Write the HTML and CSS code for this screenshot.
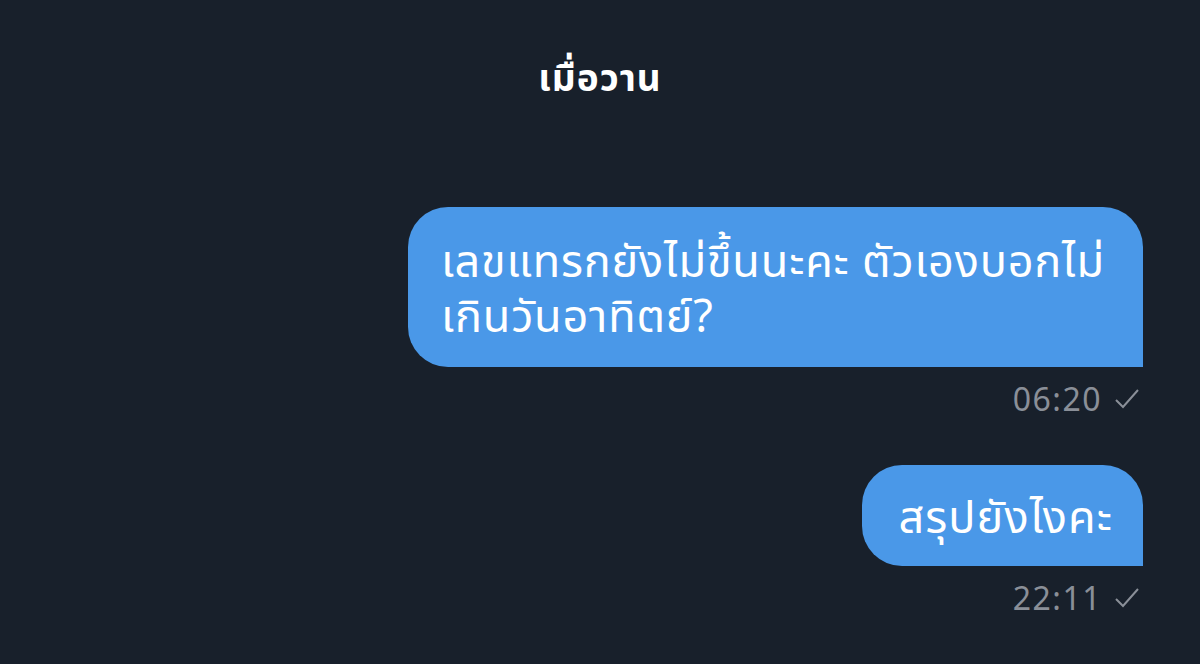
FILE: index.html
```html
<!DOCTYPE html>
<html lang="th">
<head>
  <meta charset="utf-8">
  <link rel="stylesheet" href="styles.css">
</head>
<body>
  <div class="chat">
    <div class="day">เมื่อวาน</div>
    <div class="msg">
      <div class="bubble">เลขแทรกยังไม่ขึ้นนะคะ ตัวเองบอกไม่<br>เกินวันอาทิตย์?</div>
      <div class="meta">06:20 <svg class="tick" viewBox="0 0 26 22"><path d="M2 12 L9 19 L24 2" fill="none" stroke="currentColor" stroke-width="2"/></svg></div>
    </div>
    <div class="msg">
      <div class="bubble">สรุปยังไงคะ</div>
      <div class="meta">22:11 <svg class="tick" viewBox="0 0 26 22"><path d="M2 12 L9 19 L24 2" fill="none" stroke="currentColor" stroke-width="2"/></svg></div>
    </div>
  </div>
</body>
</html>
```

FILE: styles.css
```css
html, body {
  margin: 0;
  height: 100%;
}
body {
  background-color: #18202b;
  font-family: "Noto Sans", "Noto Sans Thai", sans-serif;
  color: white;
}
.chat {
  display: flex;
  flex-direction: column;
}
.day {
  align-self: center;
  font-size: 37px;
  font-weight: bold;
  letter-spacing: 1px;
  margin: 52px 0 0;
  line-height: 50px;
}
.msg {
  display: flex;
  flex-direction: column;
  align-items: flex-end;
  margin-right: 57px;
}
.day + .msg {
  margin-top: 105px;
}
.msg + .msg {
  margin-top: 46px;
}
.bubble {
  background-color: #4a98e8;
  border-radius: 40px 40px 0 40px;
  font-size: 45px;
  letter-spacing: 0.8px;
  line-height: 55px;
  padding: 25px 38px 25px 33px;
}
.msg + .msg .bubble {
  padding: 23px 30px 23px 36px;
  letter-spacing: 1.1px;
}
.meta {
  display: flex;
  align-items: center;
  gap: 12px;
  color: #8a8f98;
  font-size: 32px;
  letter-spacing: 1.5px;
  line-height: 40px;
  margin-top: 12px;
  margin-right: 3px;
}
.tick {
  width: 26px;
  height: 22px;
}
```
